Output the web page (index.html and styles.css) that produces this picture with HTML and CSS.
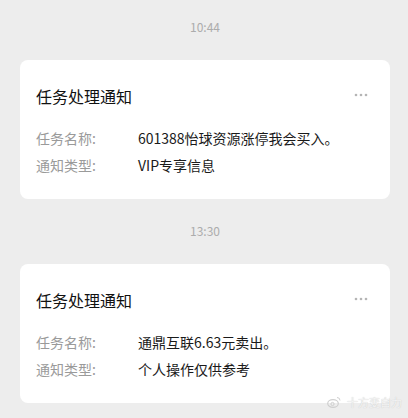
FILE: index.html
```html
<!DOCTYPE html>
<html lang="zh-CN">
<head>
    <meta charset="UTF-8">
    <meta name="viewport" content="width=device-width, initial-scale=1.0">
    <title>任务处理通知</title>
    <link rel="stylesheet" href="styles.css">
</head>
<body>
    <div class="chat">
        <div class="time">10:44</div>
        <div class="card">
            <div class="card-head">
                <span class="card-title">任务处理通知</span>
                <svg class="more" width="14" height="4" viewBox="0 0 14 4">
                    <circle cx="2" cy="2" r="1.3" fill="#b5b5b5"/>
                    <circle cx="7" cy="2" r="1.3" fill="#b5b5b5"/>
                    <circle cx="12" cy="2" r="1.3" fill="#b5b5b5"/>
                </svg>
            </div>
            <div class="row">
                <span class="label">任务名称:</span>
                <span class="value">601388怡球资源涨停我会买入。</span>
            </div>
            <div class="row">
                <span class="label">通知类型:</span>
                <span class="value">VIP专享信息</span>
            </div>
        </div>

        <div class="time">13:30</div>
        <div class="card">
            <div class="card-head">
                <span class="card-title">任务处理通知</span>
                <svg class="more" width="14" height="4" viewBox="0 0 14 4">
                    <circle cx="2" cy="2" r="1.3" fill="#b5b5b5"/>
                    <circle cx="7" cy="2" r="1.3" fill="#b5b5b5"/>
                    <circle cx="12" cy="2" r="1.3" fill="#b5b5b5"/>
                </svg>
            </div>
            <div class="row">
                <span class="label">任务名称:</span>
                <span class="value">通鼎互联6.63元卖出。</span>
            </div>
            <div class="row">
                <span class="label">通知类型:</span>
                <span class="value">个人操作仅供参考</span>
            </div>
        </div>
    </div>
    <!-- watermark -->
    <div class="watermark">
        <svg width="14" height="12" viewBox="0 0 14 12">
            <ellipse cx="6" cy="7.5" rx="5.3" ry="3.8" fill="none" stroke="#cfcfcf" stroke-width="1.2"/>
            <circle cx="5.5" cy="8" r="1.6" fill="none" stroke="#cfcfcf" stroke-width="1"/>
            <path d="M10 1.5a3 3 0 0 1 3 3" fill="none" stroke="#cfcfcf" stroke-width="1"/>
        </svg>
        <span>十方变自力</span>
    </div>
</body>
</html>
```
FILE: styles.css
```css
body {
    margin: 0;
    padding: 0;
    background-color: #ededed;
    font-family: "Noto Sans CJK SC", "Noto Sans", sans-serif;
    color: #1a1a1a;
    height: 418px;
    overflow: hidden;
    position: relative;
}

.chat {
    display: flex;
    flex-direction: column;
    padding: 0 18px 0 20px;
}

.time {
    text-align: center;
    font-size: 12px;
    line-height: 18px;
    color: #acacac;
    padding-top: 18px;
    margin-bottom: 24px;
}

.card {
    background: #fff;
    border-radius: 8px;
    padding: 26px 22px 24px 16px;
    margin-bottom: 5px;
}

.card-head {
    display: flex;
    justify-content: space-between;
    align-items: center;
    height: 20px;
    margin-bottom: 22px;
}

.card-title {
    font-size: 16px;
    line-height: 20px;
    color: #111;
}

.more {
    display: block;
    margin-top: -2px;
}

.row {
    display: flex;
    font-size: 14px;
    line-height: 20px;
    margin-bottom: 7px;
}

.row:last-child {
    margin-bottom: 0;
}

.label {
    width: 102px;
    flex-shrink: 0;
    color: #9a9a9a;
}

.value {
    color: #1a1a1a;
}

.watermark {
    position: absolute;
    right: 6px;
    bottom: 8px;
    display: flex;
    align-items: center;
    gap: 6px;
    font-size: 11px;
    color: #f4f4f4;
    text-shadow: 0 0 1px #bdbdbd;
}
```
